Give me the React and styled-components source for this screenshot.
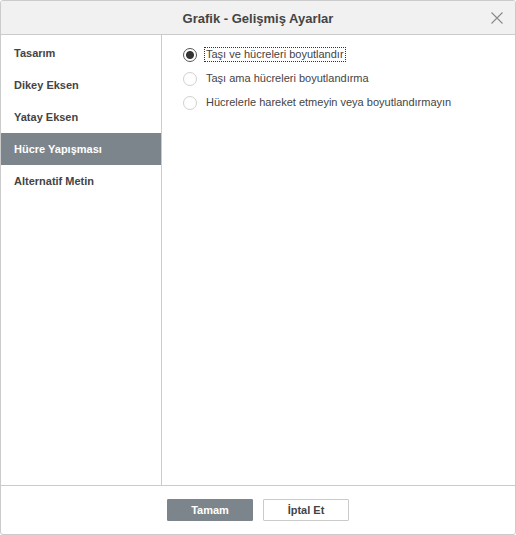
import { useState } from "react";
import styled, { createGlobalStyle } from "styled-components";

const GlobalStyle = createGlobalStyle`
  html, body {
    margin: 0;
    padding: 0;
    background: #fff;
  }
  body {
    font-family: Arial, "Liberation Sans", Helvetica, sans-serif;
  }
`;

const menu = [
  "Tasarım",
  "Dikey Eksen",
  "Yatay Eksen",
  "Hücre Yapışması",
  "Alternatif Metin",
];

const options = [
  "Taşı ve hücreleri boyutlandır",
  "Taşı ama hücreleri boyutlandırma",
  "Hücrelerle hareket etmeyin veya boyutlandırmayın",
];

const App = () => {
  const [active, setActive] = useState(3);
  const [choice, setChoice] = useState(0);

  return (
    <>
      <GlobalStyle />
      <Dialog>
        <Header>
          <Title>Grafik - Gelişmiş Ayarlar</Title>
          <CloseBtn aria-label="close">
            <svg width="12" height="12" viewBox="0 0 12 12">
              <path
                d="M0.5 0.5 L11.5 11.5 M11.5 0.5 L0.5 11.5"
                stroke="#8a8a8a"
                strokeWidth="1.1"
                fill="none"
              />
            </svg>
          </CloseBtn>
        </Header>
        <Body>
          <Sidebar>
            {menu.map((item, i) => (
              <MenuItem
                key={item}
                $active={i === active}
                onClick={() => setActive(i)}
              >
                {item}
              </MenuItem>
            ))}
          </Sidebar>
          <Content>
            {options.map((opt, i) => (
              <RadioRow key={opt} onClick={() => setChoice(i)}>
                <Radio $checked={i === choice} />
                <RadioLabel $focused={i === 0}>{opt}</RadioLabel>
              </RadioRow>
            ))}
          </Content>
        </Body>
        <Footer>
          <Button $primary>Tamam</Button>
          <Button>İptal Et</Button>
        </Footer>
      </Dialog>
    </>
  );
};

const Dialog = styled.div`
  box-sizing: border-box;
  width: 516px;
  height: 535px;
  border: 1px solid #cbcbcb;
  border-radius: 3px;
  display: flex;
  flex-direction: column;
  overflow: hidden;
  background: #fff;
`;

const Header = styled.div`
  position: relative;
  height: 33px;
  flex-shrink: 0;
  background: #f1f1f1;
  border-bottom: 1px solid #cbcbcb;
  display: flex;
  align-items: center;
  justify-content: center;
`;

const Title = styled.div`
  font-size: 13px;
  font-weight: bold;
  color: #444;
  padding-top: 1px;
`;

const CloseBtn = styled.button`
  position: absolute;
  right: 12px;
  top: 11px;
  width: 12px;
  height: 12px;
  padding: 0;
  border: 0;
  background: none;
  display: flex;
  cursor: pointer;
`;

const Body = styled.div`
  flex: 1;
  display: flex;
  min-height: 0;
`;

const Sidebar = styled.div`
  width: 160px;
  flex-shrink: 0;
  border-right: 1px solid #cbcbcb;
  padding-top: 2px;
  display: flex;
  flex-direction: column;
`;

const MenuItem = styled.div`
  height: 32px;
  display: flex;
  align-items: center;
  padding-left: 13px;
  font-size: 11px;
  font-weight: bold;
  color: ${(p) => (p.$active ? "#fff" : "#444")};
  background: ${(p) => (p.$active ? "#7d858c" : "transparent")};
  cursor: pointer;
`;

const Content = styled.div`
  flex: 1;
  padding: 12px 0 0 21px;
  display: flex;
  flex-direction: column;
  gap: 9px;
`;

const RadioRow = styled.div`
  display: flex;
  align-items: center;
  height: 15px;
  cursor: pointer;
`;

const Radio = styled.span`
  box-sizing: border-box;
  width: 14px;
  height: 14px;
  border-radius: 50%;
  border: 1px solid ${(p) => (p.$checked ? "#555" : "#d0d0d0")};
  background: ${(p) =>
    p.$checked
      ? "radial-gradient(circle, #333 0, #333 3.5px, #fff 4.5px)"
      : "#fff"};
  flex-shrink: 0;
`;

const RadioLabel = styled.span`
  margin-left: 8px;
  font-size: 11px;
  color: #444;
  line-height: 13px;
  padding: 0 1px;
  outline: ${(p) => (p.$focused ? "1px dotted #333" : "none")};
`;

const Footer = styled.div`
  height: 48px;
  flex-shrink: 0;
  border-top: 1px solid #cbcbcb;
  display: flex;
  align-items: center;
  justify-content: center;
  gap: 10px;
`;

const Button = styled.button`
  box-sizing: border-box;
  width: 86px;
  height: 22px;
  font-family: Arial, "Liberation Sans", sans-serif;
  font-size: 11px;
  font-weight: bold;
  border-radius: 1px;
  padding: 0;
  cursor: pointer;
  color: ${(p) => (p.$primary ? "#fff" : "#444")};
  background: ${(p) => (p.$primary ? "#7d858c" : "#fff")};
  border: 1px solid ${(p) => (p.$primary ? "#7d858c" : "#cbcbcb")};
`;

export default App;
